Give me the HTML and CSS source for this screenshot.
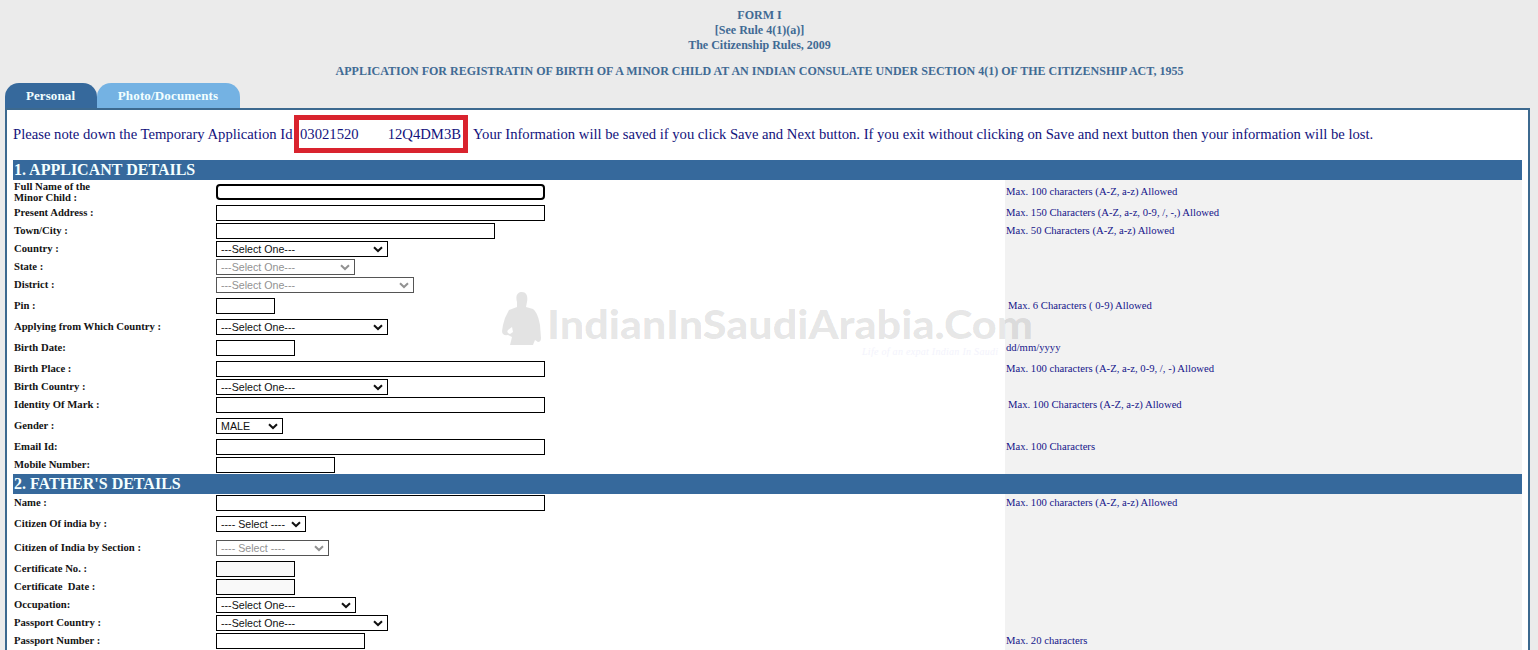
FILE: index.html
```
<!DOCTYPE html>
<html lang="en">
<head>
<meta charset="utf-8">
<title>Form I</title>
<link rel="stylesheet" href="styles.css">
</head>
<body>
<header class="heading">
<div>FORM I</div>
<div>[See Rule 4(1)(a)]</div>
<div>The Citizenship Rules, 2009</div>
<div class="act">APPLICATION FOR REGISTRATIN OF BIRTH OF A MINOR CHILD AT AN INDIAN CONSULATE UNDER SECTION 4(1) OF THE CITIZENSHIP ACT, 1955</div>
</header>
<nav class="tabs"><a class="tab active">Personal</a><a class="tab photo">Photo/Documents</a></nav>
<main class="panel">
<div class="note"><span class="lead">Please note down the Temporary Application Id</span><span class="appid"><span>03021520</span><span>12Q4DM3B</span></span><span class="rest">Your Information will be saved if you click Save and Next button. If you exit without clicking on Save and next button then your information will be lost.</span></div>
<h2>1. APPLICANT DETAILS</h2>
<div class="row tall"><label class="two">Full Name of the<br>Minor Child :</label><div><input class="w329 focused"></div><p>Max. 100 characters (A-Z, a-z) Allowed</p></div>
<div class="row"><label>Present Address :</label><div><input class="w329"></div><p>Max. 150 Characters (A-Z, a-z, 0-9, /, -,) Allowed</p></div>
<div class="row"><label>Town/City :</label><div><input class="w279"></div><p>Max. 50 Characters (A-Z, a-z) Allowed</p></div>
<div class="row"><label>Country :</label><div><select class="w172"><option>---Select One---</option></select></div><p></p></div>
<div class="row"><label>State :</label><div><select class="w139" disabled><option>---Select One---</option></select></div><p></p></div>
<div class="row"><label>District :</label><div><select class="w198" disabled><option>---Select One---</option></select></div><p></p></div>
<div class="row tall"><label>Pin :</label><div><input class="w59"></div><p class="in">Max. 6 Characters ( 0-9) Allowed</p></div>
<div class="row"><label>Applying from Which Country :</label><div><select class="w172"><option>---Select One---</option></select></div><p></p></div>
<div class="row tall"><label>Birth Date:</label><div><input class="w79"></div><p>dd/mm/yyyy</p></div>
<div class="row"><label>Birth Place :</label><div><input class="w329"></div><p>Max. 100 characters (A-Z, a-z, 0-9, /, -) Allowed</p></div>
<div class="row"><label>Birth Country :</label><div><select class="w172"><option>---Select One---</option></select></div><p></p></div>
<div class="row"><label>Identity Of Mark :</label><div><input class="w329"></div><p class="in">Max. 100 Characters (A-Z, a-z) Allowed</p></div>
<div class="row tall"><label>Gender :</label><div><select class="w67"><option>MALE</option></select></div><p></p></div>
<div class="row"><label>Email Id:</label><div><input class="w329"></div><p>Max. 100 Characters</p></div>
<div class="row"><label>Mobile Number:</label><div><input class="w119"></div><p></p></div>
<h2>2. FATHER'S DETAILS</h2>
<div class="row"><label>Name :</label><div><input class="w329"></div><p>Max. 100 characters (A-Z, a-z) Allowed</p></div>
<div class="row tall"><label>Citizen Of india by :</label><div><select class="w90"><option>---- Select ----</option></select></div><p></p></div>
<div class="row tall"><label>Citizen of India by Section :</label><div><select class="w113" disabled><option>---- Select ----</option></select></div><p></p></div>
<div class="row"><label>Certificate No. :</label><div><input class="w79 off"></div><p></p></div>
<div class="row"><label>Certificate&nbsp; Date :</label><div><input class="w79 off"></div><p></p></div>
<div class="row"><label>Occupation:</label><div><select class="w140"><option>---Select One---</option></select></div><p></p></div>
<div class="row"><label>Passport Country :</label><div><select class="w172"><option>---Select One---</option></select></div><p></p></div>
<div class="row"><label>Passport Number :</label><div><input class="w149"></div><p>Max. 20 characters</p></div>
</main>
<svg class="watermark" width="540" height="75" viewBox="0 0 540 75">
<path d="M17 12C15 5 18 2 22 2C27 2 28 7 27 12L26 17L33 19C37 22 39 29 40 35L41 48Q41 52 38 52L35 50L33 55H10L12 47L8 45Q2 46 2 41L3 35L5 28L9 20L17 17ZM12 37L8 40Q6 43 10 44L13 42Z" fill-rule="evenodd"/>
<text class="brand" x="47" y="49" textLength="486" lengthAdjust="spacingAndGlyphs">IndianInSaudiArabia.Com</text>
<text class="tagline" x="362" y="65" textLength="136">Life of an expat Indian In Saudi</text>
</svg>
</body>
</html>
```
FILE: styles.css
```
body { margin: 0; height: 650px; overflow: hidden; background: #ebebeb; font-family: "Liberation Serif", "Times New Roman", serif; position: relative; }
.heading { padding: 8px 19px 0 0; box-sizing: border-box; height: 83px; text-align: center; font-size: 12px; font-weight: bold; line-height: 15px; color: #406a94; }
.act { margin-top: 11px; }
.tabs { display: flex; height: 25px; padding-left: 5px; }
.tab { box-sizing: border-box; width: 92px; padding-right: 1px; border-radius: 14px 14px 0 0; background: #36699c; color: #f2ffff; font-size: 13px; line-height: 26px; font-weight: bold; text-align: center; }
.tab.active { letter-spacing: .1px; }
.tab.photo { width: 143px; letter-spacing: .15px; background: #74b2e3; }
.panel { box-sizing: border-box; height: 560px; margin: 0 8px 0 5px; border: 2px solid #3c698f; padding: 0 6px; background: #fff; }
.note { display: flex; height: 50px; align-items: center; white-space: pre; font-size: 14.67px; color: #12127c; }
.lead, .rest { padding-bottom: 2px; }
.lead { width: 281px; }
.appid { box-sizing: border-box; width: 174px; height: 38px; margin-top: -3px; padding: 2px 2px 0 1px; border: 5px solid #d9232e; display: flex; align-items: center; justify-content: space-between; }
.rest { margin-left: 5px; letter-spacing: -.01px; }
h2 { margin: 0; height: 20px; padding-left: 1px; background: #36699c; color: #f4ffff; font-size: 16px; line-height: 20px; }
.row { display: grid; grid-template-columns: 203px 789px 1fr; height: 18px; align-items: center; font-size: 10.67px; }
.tall { height: 24px; }
.row > div { display: flex; }
label { padding: 0 0 2px 1px; font-weight: bold; color: #141414; }
.two { padding-bottom: 0; line-height: 11px; }
p { box-sizing: border-box; margin: 0; height: 100%; padding: 0 0 2px 1px; display: flex; align-items: center; background: #f2f2f2; color: #15158a; white-space: pre; }
.in { padding-left: 3px; }
input, select { box-sizing: border-box; height: 16px; margin: 0; padding: 0; border: 1px solid #000; border-radius: 0; background: #fff; color: #111; font: 11px "Liberation Sans", Arial, sans-serif; }
select { appearance: none; padding: 0 0 1px 4px; font-size: 10.67px; background: #fff url("data:image/svg+xml,%3Csvg xmlns='http://www.w3.org/2000/svg' width='10' height='7'%3E%3Cpath d='M1 1.2L5 5L9 1.2' fill='none' stroke='%23111' stroke-width='2'/%3E%3C/svg%3E") no-repeat right 4px top 4px; }
select:disabled { border-color: #555; color: #929292; opacity: 1; background-image: url("data:image/svg+xml,%3Csvg xmlns='http://www.w3.org/2000/svg' width='10' height='7'%3E%3Cpath d='M1 1.2L5 5L9 1.2' fill='none' stroke='%23929292' stroke-width='2'/%3E%3C/svg%3E"); }
.off { background: #f9f9f9; }
.focused { border-width: 2px; border-radius: 4px; }
.w329 { width: 329px; }
.w279 { width: 279px; }
.w172 { width: 172px; }
.w139 { width: 139px; }
.w198 { width: 198px; }
.w59 { width: 59px; }
.w79 { width: 79px; }
.w67 { width: 67px; }
.w119 { width: 119px; }
.w90 { width: 90px; }
.w113 { width: 113px; }
.w140 { width: 140px; }
.w149 { width: 149px; }
.watermark { position: absolute; left: 500px; top: 290px; fill: rgba(0, 0, 0, .11); pointer-events: none; }
.brand { font: 900 40px Lato, sans-serif; }
.tagline { font: italic 10px "Liberation Serif", serif; fill: #f3f3fc; }
```
